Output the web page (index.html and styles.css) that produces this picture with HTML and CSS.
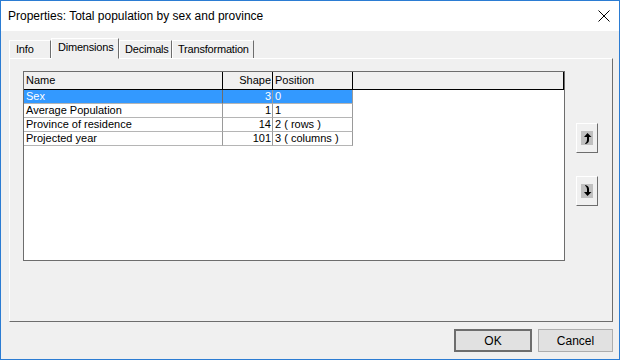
FILE: index.html
```html
<!DOCTYPE html>
<html>
<head>
<meta charset="utf-8">
<link rel="stylesheet" href="styles.css">
</head>
<body>
<div class="window">
  <div class="titlebar">
    <span class="title">Properties: Total population by sex and province</span>
    <svg class="close" width="12" height="12" viewBox="0 0 12 12"><path d="M0.5 0.5 L11.5 11.5 M11.5 0.5 L0.5 11.5" stroke="#000" stroke-width="1"/></svg>
  </div>
  <div class="content">
    <div class="tabs">
      <div class="tab t-info">Info</div>
      <div class="tab active t-dim">Dimensions</div>
      <div class="tab t-dec">Decimals</div>
      <div class="tab t-tr">Transformation</div>
    </div>
    <div class="panel">
      <div class="grid">
        <div class="row head">
          <div class="c name">Name</div>
          <div class="c shape">Shape</div>
          <div class="c pos">Position</div>
          <div class="c rest"></div>
        </div>
        <div class="row sel">
          <div class="c name">Sex</div>
          <div class="c shape">3</div>
          <div class="c pos">0</div>
        </div>
        <div class="row">
          <div class="c name">Average Population</div>
          <div class="c shape">1</div>
          <div class="c pos">1</div>
        </div>
        <div class="row">
          <div class="c name">Province of residence</div>
          <div class="c shape">14</div>
          <div class="c pos">2 ( rows )</div>
        </div>
        <div class="row">
          <div class="c name">Projected year</div>
          <div class="c shape">101</div>
          <div class="c pos">3 ( columns )</div>
        </div>
      </div>
      <div class="side">
        <button class="mv up"><span class="ico"><svg width="12" height="14" viewBox="0 0 12 14"><path d="M6.5 2 L10.5 6 L8 6 L8 9 Q8 12 4.5 13 L4 12.5 Q6 11 6 9 L6 6 L3 6 Z" fill="#000"/></svg></span></button>
        <button class="mv down"><span class="ico"><svg width="12" height="14" viewBox="0 0 12 14"><path d="M6.5 12 L10.5 8 L8 8 L8 5 Q8 2 4.5 1 L4 1.5 Q6 3 6 5 L6 8 L3 8 Z" fill="#000"/></svg></span></button>
      </div>
    </div>
    <div class="footer">
      <button class="btn ok">OK</button>
      <button class="btn">Cancel</button>
    </div>
  </div>
</div>
</body>
</html>
```
FILE: styles.css
```css
html, body { margin: 0; padding: 0; background: #ffffff; }
body { width: 622px; height: 362px; overflow: hidden; }
.window {
  box-sizing: border-box;
  width: 620px; height: 360px;
  border: 1px solid #2b7cd3;
  background: #f0f0f0;
  display: flex; flex-direction: column;
  font-family: "Liberation Sans", Arial, sans-serif;
  font-size: 11px; color: #000;
}
.titlebar {
  height: 30px; background: #fff;
  display: flex; align-items: center; justify-content: space-between;
  padding: 0 9px 0 7px;
}
.title { font-family: "Liberation Sans", Arial, sans-serif; font-size: 12px; color: #000; }
.close { display: block; }
.content { flex: 1; display: flex; flex-direction: column; padding: 7px 6px 0 8px; }
.tabs { display: flex; height: 20px; align-items: flex-end; position: relative; z-index: 1; }
.tab {
  box-sizing: border-box; height: 18px; padding: 2px 0 0 5px;
  border-left: 1px solid #fff; border-top: 1px solid #fff; border-right: 1px solid #6d6d6d;
  background: #f0f0f0; white-space: nowrap; letter-spacing: -0.2px;
}
.t-info { width: 42px; padding-left: 6px; }
.t-dim { width: 68px; }
.t-dec { width: 53px; }
.t-tr { width: 82px; }
.tab.active { height: 21px; border-bottom: 1px solid #f0f0f0; margin-bottom: -1px; padding-top: 2px; padding-left: 6px; }
.panel {
  box-sizing: border-box; height: 264px;
  border-left: 1px solid #fff; border-top: 1px solid #fff;
  border-right: 1px solid #6d6d6d; border-bottom: 1px solid #6d6d6d;
  display: flex; padding: 12px 14px 0 13px; gap: 11px;
}
.grid {
  box-sizing: border-box; width: 543px; height: 190px;
  border: 1px solid #6d6d6d; background: #fff;
}
.row { box-sizing: border-box; display: flex; height: 14px; line-height: 13px; }
.row .c { box-sizing: border-box; border-right: 1px solid #9a9a9a; border-bottom: 1px solid #b5b5b5; padding: 0 2px; white-space: nowrap; overflow: hidden; }
.row.head { height: 18px; line-height: 17px; background: #f0f0f0; border-bottom: 1px solid #000; }
.row.head .c { border-right: 1px solid #000; border-bottom: none; }
.c.name { width: 199px; }
.c.shape { width: 50px; text-align: right; padding-right: 1px; }
.c.pos { width: 80px; }
.c.rest { flex: 1; }
.row.sel .c { background: #3399ff; color: #fff; }
.row.sel .c.name { border-right-color: #6d6d6d; }
.side { display: flex; flex-direction: column; padding-top: 52px; gap: 23px; }
.mv {
  box-sizing: border-box; width: 22px; height: 30px; padding: 0;
  background: #f0f0f0; border: 1px solid; border-color: #fff #6d6d6d #6d6d6d #fff;
  display: flex; align-items: center; justify-content: center;
}
.ico { width: 12px; height: 14px; background: #c0c0c0; display: block; }
.ico svg { display: block; }
.footer { display: flex; justify-content: flex-end; gap: 6px; padding-top: 7px; }
.btn {
  box-sizing: border-box; height: 23px; width: 75px;
  font-family: "Liberation Sans", Arial, sans-serif; font-size: 12px;
  background: #e1e1e1; border: 1px solid #adadad; color: #000; padding: 0;
}
.btn.ok { width: 78px; border: 2px solid #6d6d6d; }
```
